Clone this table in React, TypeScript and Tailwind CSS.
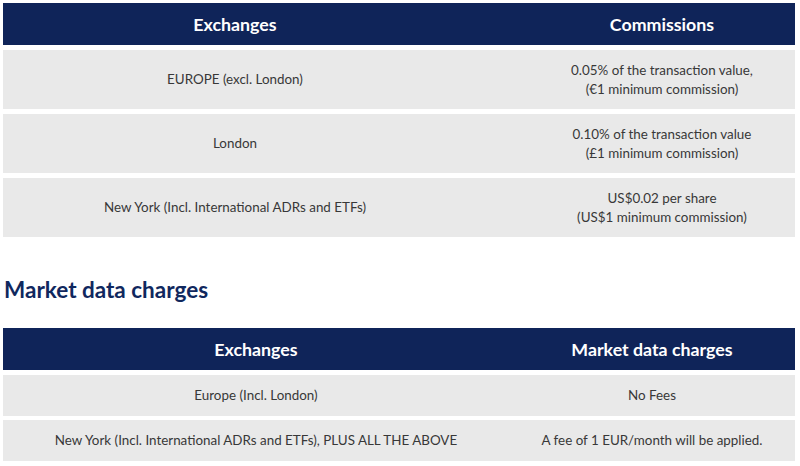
import React from 'react';

const COMMISSIONS = [
  { exchange: 'EUROPE (excl. London)', lines: ['0.05% of the transaction value,', '(€1 minimum commission)'] },
  { exchange: 'London', lines: ['0.10% of the transaction value', '(£1 minimum commission)'] },
  { exchange: 'New York (Incl. International ADRs and ETFs)', lines: ['US$0.02 per share', '(US$1 minimum commission)'] },
];

const MARKET_DATA = [
  { exchange: 'Europe (Incl. London)', charge: 'No Fees' },
  { exchange: 'New York (Incl. International ADRs and ETFs), PLUS ALL THE ABOVE', charge: 'A fee of 1 EUR/month will be applied.' },
];

export default function App() {
  return (
    <div className="min-h-[466px] w-[800px] bg-white pl-[3px] pr-[5px] pt-[3px] font-['Lato','Liberation_Sans',sans-serif] text-[13.4px] text-[#383838]">
      <div className="flex flex-col gap-[5px]">
        <div className="grid h-[42px] grid-cols-[464px_1fr] items-center bg-[#0f2459] text-[17.8px] font-bold text-white">
          <div className="text-center">Exchanges</div>
          <div className="pl-[62px] text-center">Commissions</div>
        </div>
        {COMMISSIONS.map((row) => (
          <div key={row.exchange} className="grid h-[59px] grid-cols-[464px_1fr] items-center bg-[#e9e9e9] leading-[19px]">
            <div className="text-center">{row.exchange}</div>
            <div className="pl-[62px] text-center">
              {row.lines.map((line) => (
                <div key={line}>{line}</div>
              ))}
            </div>
          </div>
        ))}
      </div>

      <h2 className="mt-[38px] pl-[1px] text-[22.5px] font-bold leading-[30px] text-[#10285e]">Market data charges</h2>

      <div className="mt-[23px] flex flex-col gap-[5px]">
        <div className="grid h-[42px] grid-cols-[506px_1fr] items-center bg-[#0f2459] text-[17.8px] font-bold text-white">
          <div className="text-center">Exchanges</div>
          <div className="text-center">Market data charges</div>
        </div>
        <div className="flex flex-col gap-[4px]">
          {MARKET_DATA.map((row) => (
            <div key={row.exchange} className="grid h-[41px] grid-cols-[506px_1fr] items-center bg-[#e9e9e9]">
              <div className="text-center">{row.exchange}</div>
              <div className="text-center">{row.charge}</div>
            </div>
          ))}
        </div>
      </div>
    </div>
  );
}
